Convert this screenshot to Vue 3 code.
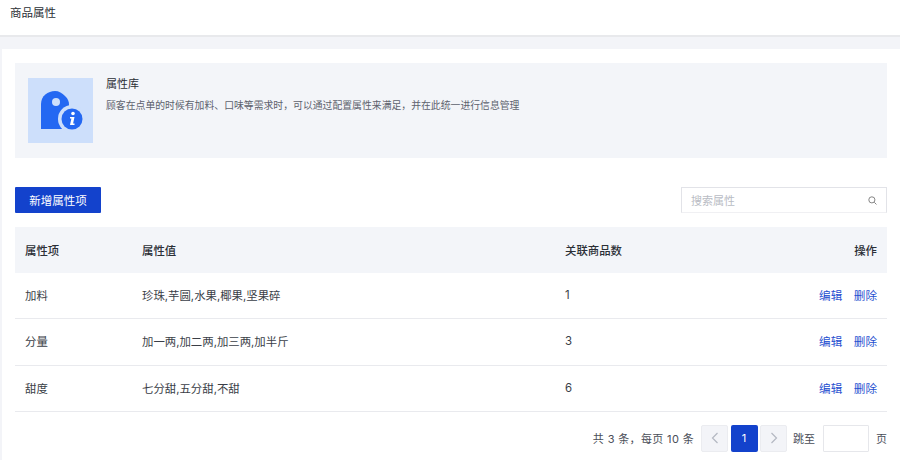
<script setup>
const rows = [
  { name: '加料', values: '珍珠,芋圆,水果,椰果,坚果碎', count: 1 },
  { name: '分量', values: '加一两,加二两,加三两,加半斤', count: 3 },
  { name: '甜度', values: '七分甜,五分甜,不甜', count: 6 }
]
</script>

<template>
  <div class="page">
    <header class="topbar">商品属性</header>
    <main class="card">
      <section class="banner">
        <div class="icon-box">
          <svg width="42" height="42" viewBox="0 0 42 42">
            <path fill="#2468f2" d="M0 38V13C0 5 7 0 14 0C18 0 21 2 24 5C27 8 28 10 28 14V38z" />
            <circle cx="15" cy="11" r="4" fill="#cddffb" />
            <circle cx="31" cy="28" r="14" fill="#cddffb" />
            <circle cx="31" cy="28" r="10.5" fill="#2468f2" />
            <circle cx="32" cy="22.5" r="1.8" fill="#fff" />
            <path fill="#fff" d="M29 26h4.5l-1.4 6.4h1.4v1.6h-4.5l1.4-6.4H29z" />
          </svg>
        </div>
        <div class="banner-text">
          <h2>属性库</h2>
          <p>顾客在点单的时候有加料、口味等需求时，可以通过配置属性来满足，并在此统一进行信息管理</p>
        </div>
      </section>

      <div class="toolbar">
        <button class="primary">新增属性项</button>
        <div class="search">
          <span>搜索属性</span>
          <svg width="9" height="9" viewBox="0 0 10 10" fill="none" stroke="#777" stroke-width="1">
            <circle cx="4.3" cy="4.3" r="3.4" />
            <path d="M7 7l2.4 2.4" />
          </svg>
        </div>
      </div>

      <div class="table">
        <div class="tr head">
          <div>属性项</div>
          <div>属性值</div>
          <div>关联商品数</div>
          <div class="ops">操作</div>
        </div>
        <div v-for="row in rows" :key="row.name" class="tr">
          <div>{{ row.name }}</div>
          <div>{{ row.values }}</div>
          <div>{{ row.count }}</div>
          <div class="ops"><a>编辑</a><a>删除</a></div>
        </div>
      </div>

      <nav class="pager">
        <span class="total">共 3 条，每页 10 条</span>
        <span class="pg off">
          <svg width="8" height="12" viewBox="0 0 8 12" fill="none" stroke="#b4b8c2" stroke-width="1.2"><path d="M6.5 1L1.5 6l5 5" /></svg>
        </span>
        <span class="pg on">1</span>
        <span class="pg off last">
          <svg width="8" height="12" viewBox="0 0 8 12" fill="none" stroke="#b4b8c2" stroke-width="1.2"><path d="M1.5 1l5 5-5 5" /></svg>
        </span>
        <span class="jump">跳至</span>
        <span class="jump-input"></span>
        <span class="jump-end">页</span>
      </nav>
    </main>
  </div>
</template>

<style>
html, body { margin: 0; background: #f3f4f8; overflow: hidden; }
</style>

<style scoped>
.page {
  width: 900px;
  height: 460px;
  overflow: hidden;
  background: #f3f4f8;
  font-family: "Inter", "Noto Sans CJK SC", sans-serif;
  color: #2b2f36;
}
.topbar {
  box-sizing: content-box;
  padding: 0 10px;
  height: 35px;
  line-height: 27px;
  background: #fff;
  border-bottom: 2px solid #e8e9ec;
  font-size: 11.5px;
}
.card {
  margin: 12px 0 0 2px;
  padding: 14px 13px 0;
  background: #fff;
  height: 420px;
}
.banner {
  display: flex;
  height: 95px;
  box-sizing: border-box;
  padding: 15px 13px;
  gap: 13px;
  background: #f3f5f9;
}
.icon-box {
  width: 65px;
  height: 65px;
  background: #cddffb;
  display: flex;
  align-items: center;
  justify-content: center;
}
.icon-box svg { margin: 3px 0 0 3px; }
.banner-text h2 {
  margin: 1px 0 0;
  font-size: 11px;
  line-height: 11px;
  font-weight: 400;
  color: #2b2f36;
}
.banner-text p {
  margin: 9px 0 0;
  font-size: 9.85px;
  line-height: 12px;
  color: #5d626d;
}
.toolbar {
  display: flex;
  justify-content: space-between;
  margin-top: 29px;
  height: 26px;
}
.primary {
  width: 86px;
  height: 26px;
  padding: 0;
  border: 0;
  border-radius: 1px;
  background: #1342cc;
  color: #fff;
  font: inherit;
  font-size: 11.5px;
}
.search {
  width: 206px;
  height: 26px;
  box-sizing: border-box;
  display: flex;
  align-items: center;
  justify-content: space-between;
  padding: 0 9px;
  border: 1px solid #e2e3e8;
  border-bottom-color: #f0f0f3;
  font-size: 11px;
  color: #b9bcc4;
}
.table { margin-top: 14px; }
.tr {
  display: grid;
  grid-template-columns: 117px 423px 1fr 110px;
  align-items: center;
  height: 46.3px;
  box-sizing: border-box;
  padding: 0 10px 1px;
  border-bottom: 1px solid #e9eaee;
  font-size: 11.4px;
  color: #3a3e47;
}
.tr.head {
  height: 46px;
  padding-bottom: 0;
  background: #f3f5f9;
  border-bottom: 0;
  font-weight: 500;
  color: #2b2f36;
}
.ops { text-align: right; }
.ops a { color: #1f50d0; margin-left: 11.5px; font-size: 11.6px; }
.pager {
  display: flex;
  align-items: center;
  justify-content: flex-end;
  height: 27px;
  margin-top: 13px;
  font-size: 11px;
  color: #4a4e58;
}
.total { margin-right: 7px; letter-spacing: .35px; }
.pg {
  width: 27px;
  height: 27px;
  border-radius: 2px;
  display: flex;
  align-items: center;
  justify-content: center;
  box-sizing: border-box;
  margin-right: 2.5px;
}
.pg.last { margin-right: 0; }
.pg.off { background: #f3f4f8; border: 1px solid #ebecf0; }
.pg.on { background: #1342cc; color: #fff; }
.jump { margin: 0 8px 0 6px; }
.jump-input {
  width: 46px;
  height: 27px;
  box-sizing: border-box;
  border: 1px solid #e6e7eb;
  border-radius: 1px;
}
.jump-end { margin-left: 7px; width: 11px; }
</style>
